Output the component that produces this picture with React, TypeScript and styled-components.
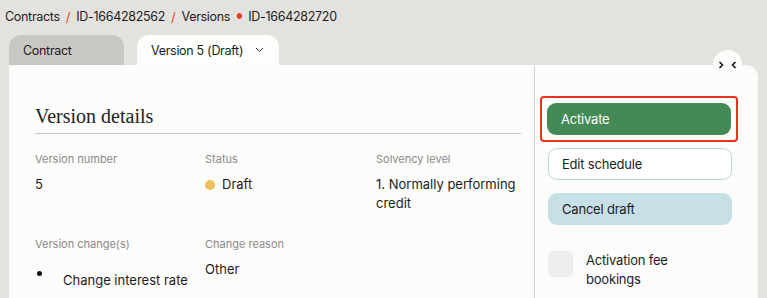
import React from "react";
import styled, { createGlobalStyle } from "styled-components";

const GlobalStyle = createGlobalStyle`
  html, body {
    margin: 0;
    padding: 0;
    background: #e4e2de;
    font-family: Inter, "Noto Sans", sans-serif;
    color: #1c1c1c;
  }
`;

const Page = styled.div`
  width: 767px;
  height: 298px;
  overflow: hidden;
`;

const Breadcrumb = styled.nav`
  display: flex;
  align-items: center;
  gap: 6px;
  height: 33px;
  padding-left: 5px;
  font-size: 12.5px;
  letter-spacing: -0.3px;
`;

const Crumb = styled.span``;

const Sep = styled.span<{ $dot?: boolean }>`
  color: #e3452e;
  font-size: ${(p) => (p.$dot ? "7px" : "13px")};
`;

const Tabs = styled.div`
  display: flex;
  gap: 13px;
  margin-left: 9px;
  margin-top: 2px;
`;

const Tab = styled.div<{ $active?: boolean }>`
  display: flex;
  align-items: center;
  gap: 12px;
  height: 30px;
  padding: 0 ${(p) => (p.$active ? "15px" : "14px")} 0 14px;
  width: ${(p) => (p.$active ? "auto" : "115px")};
  box-sizing: border-box;
  border-radius: 12px 12px 0 0;
  background: ${(p) => (p.$active ? "#fdfdfc" : "#c8c7c3")};
  font-size: 12.5px;
  letter-spacing: -0.3px;
`;

const Chevron = () => (
  <svg width="9" height="6" viewBox="0 0 9 6" fill="none">
    <path d="M1 1l3.5 3.5L8 1" stroke="#333" strokeWidth="1" />
  </svg>
);

const Panel = styled.div`
  position: relative;
  display: grid;
  grid-template-columns: 525px 1fr;
  margin: 0 9px;
  height: 240px;
  background: #fcfcfb;
  border-radius: 0 12px 0 0;
`;

const Main = styled.section`
  padding: 40px 13px 0 26px;
`;

const Heading = styled.h2`
  margin: 0;
  padding-bottom: 5px;
  border-bottom: 1px solid #c9c9c7;
  font-family: "Liberation Serif", serif;
  font-weight: 400;
  font-size: 20px;
  color: #222;
`;

const FieldGrid = styled.div`
  display: grid;
  grid-template-columns: 170px 171px 1fr;
  row-gap: 24px;
  margin-top: 18px;
`;

const Field = styled.div``;

const Label = styled.div`
  font-size: 11px;
  color: #8a8a88;
  margin-bottom: 9px;
`;

const Value = styled.div`
  font-size: 13px;
  line-height: 19px;
  color: #1c1c1c;
  display: flex;
  align-items: center;
  gap: 7px;
`;

const Dot = styled.span`
  width: 10px;
  height: 10px;
  border-radius: 50%;
  background: #efc05d;
`;

const BulletItem = styled.div`
  display: flex;
  align-items: center;
  gap: 21px;
  margin-top: 20px;
  padding-left: 2px;
  font-size: 13px;
  line-height: 19px;
  &::before {
    content: "";
    width: 5px;
    height: 5px;
    border-radius: 50%;
    background: #111;
    margin-top: -15px;
  }
`;

const Side = styled.aside`
  border-left: 1px solid #cfcfcd;
  padding: 31px 26px 0 13px;
  display: flex;
  flex-direction: column;
  gap: 13px;
`;

const Button = styled.button<{ $variant: "primary" | "outline" | "soft" }>`
  height: 32px;
  width: 184px;
  border-radius: 9px;
  text-align: left;
  padding: 0 13px;
  font-family: Inter, "Noto Sans", sans-serif;
  font-size: 13px;
  letter-spacing: -0.2px;
  cursor: pointer;
  border: 1px solid
    ${(p) => (p.$variant === "outline" ? "#b9d2da" : "transparent")};
  background: ${(p) =>
    p.$variant === "primary" ? "#438a56" : p.$variant === "soft" ? "#c6e0e6" : "#fff"};
  color: ${(p) => (p.$variant === "primary" ? "#fff" : "#1c1c1c")};
`;

const Highlight = styled.div`
  border: 2px solid #e8321f;
  border-radius: 4px;
  padding: 5px;
  margin: 0 -6px -7px -8px;
  display: flex;
`;

const CheckRow = styled.label`
  display: flex;
  gap: 13px;
  margin-top: 13px;
  font-size: 13px;
  line-height: 19px;
  letter-spacing: -0.2px;
`;

const Box = styled.span`
  width: 25px;
  height: 26px;
  border-radius: 5px;
  background: #efeeec;
  flex-shrink: 0;
`;

const Collapse = styled.div`
  position: absolute;
  top: -15px;
  right: 16px;
  width: 29px;
  height: 29px;
  border-radius: 50%;
  background: #fcfcfb;
  display: flex;
  align-items: center;
  justify-content: center;
`;

const CollapseIcon = () => (
  <svg width="19" height="8" viewBox="0 0 19 8" fill="none">
    <path d="M1.5 1l3 3-3 3M17.5 1l-3 3 3 3" stroke="#111" strokeWidth="1.6" />
  </svg>
);

export default function App() {
  return (
    <Page>
      <GlobalStyle />
      <Breadcrumb>
        <Crumb>Contracts</Crumb>
        <Sep>/</Sep>
        <Crumb>ID-1664282562</Crumb>
        <Sep>/</Sep>
        <Crumb>Versions</Crumb>
        <Sep $dot>●</Sep>
        <Crumb>ID-1664282720</Crumb>
      </Breadcrumb>
      <Tabs>
        <Tab>Contract</Tab>
        <Tab $active>
          Version 5 (Draft)
          <Chevron />
        </Tab>
      </Tabs>
      <Panel>
        <Collapse>
          <CollapseIcon />
        </Collapse>
        <Main>
          <Heading>Version details</Heading>
          <FieldGrid>
            <Field>
              <Label>Version number</Label>
              <Value>5</Value>
            </Field>
            <Field>
              <Label>Status</Label>
              <Value>
                <Dot />
                Draft
              </Value>
            </Field>
            <Field>
              <Label>Solvency level</Label>
              <Value>
                1. Normally performing
                <br />
                credit
              </Value>
            </Field>
            <Field>
              <Label>Version change(s)</Label>
              <BulletItem>Change interest rate</BulletItem>
            </Field>
            <Field>
              <Label>Change reason</Label>
              <Value>Other</Value>
            </Field>
          </FieldGrid>
        </Main>
        <Side>
          <Highlight>
            <Button $variant="primary">Activate</Button>
          </Highlight>
          <Button $variant="outline">Edit schedule</Button>
          <Button $variant="soft">Cancel draft</Button>
          <CheckRow>
            <Box />
            <span>
              Activation fee
              <br />
              bookings
            </span>
          </CheckRow>
        </Side>
      </Panel>
    </Page>
  );
}
